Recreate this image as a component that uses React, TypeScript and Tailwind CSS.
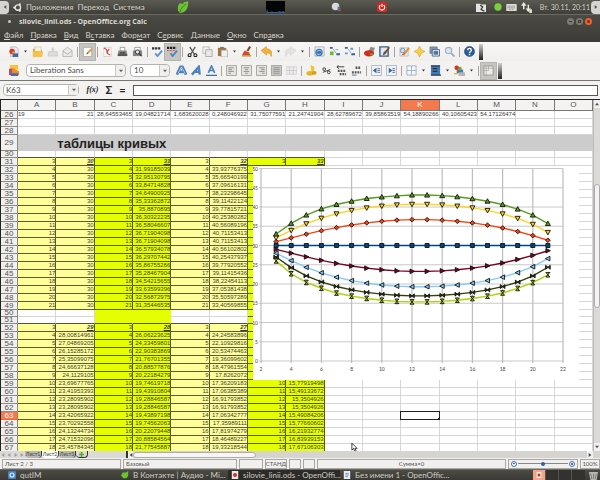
import clsx from "clsx";
import type { ReactNode } from "react";

const COLUMNS = ["A", "B", "C", "D", "E", "F", "G", "H", "I", "J", "K", "L", "M", "N", "O"];

const ROW_26 = [
  "19", "21", "28,64553465", "19,04821714", "1,683620028", "0,248046922", "31,75077591", "21,24741904",
  "28,62789672", "39,85863519", "54,18890266", "40,10605423", "54,17126474",
];

const LINE_31 = [
  "31", "31,99185039", "32,95130795", "33,84714828", "34,64900925", "35,33362872", "35,8870895", "36,30322235",
  "36,58046607", "36,71904098", "36,71904098", "36,57934078", "36,29707442", "35,86755266", "35,28467904",
  "34,54215655", "33,63599396", "32,56872975", "31,35446535",
];

const LINE_32 = [
  "32", "33,93776375", "35,66540199", "37,09616131", "38,23298645", "39,11422124", "39,77815721", "40,25380282",
  "40,56089196", "40,71153413", "40,71153413", "40,56102802", "40,25437937", "39,77920552", "39,11415436",
  "38,22454113", "37,05381438", "35,50597289", "33,40569855",
];

const LINE_29 = [
  "29", "28,00814961", "27,04869205", "26,15285172", "25,35099075", "24,66637128", "24,1129105", "23,69677765",
  "23,41953393", "23,28095902", "23,28095902", "23,42065922", "23,70292558", "24,13244734", "24,71532096",
  "25,45784345",
];

const LINE_28 = [
  "28", "26,06223625", "24,33459801", "22,90383869", "21,76701355", "20,88577876", "20,22184279", "19,74619718",
  "19,43910804", "19,28846587", "19,28846587", "19,43897198", "19,74562063", "20,22079448", "20,88584564",
  "21,77545887",
];

const LINE_27 = [
  "27", "24,24583896", "22,10929816", "20,53474463", "19,36099602", "18,47961554", "17,8262072", "17,36209183",
  "17,06385389", "16,91793852", "16,91793852", "17,06342777", "17,35989111", "17,81974279", "18,46489227",
  "19,33218544",
];

const LINE_26 = [
  "26", "22,66", "20,4", "18,9", "17,65", "16,85", "16,25", "15,77919498", "15,49133672", "15,3504926",
  "15,3504926", "15,49084206", "15,77660602", "16,21932774", "16,83939153", "17,67106303",
];

const toNumber = (value: string) => Number(value.replace(",", "."));

/* ---------- icons ---------- */

const ICONS: Record<string, ReactNode> = {
  newDoc: (
    <>
      <path d="M3 1h6l2 2v9H3z" fill="#e9edf2" stroke="#8b97a8" strokeWidth=".6" />
      <circle cx="4.500" cy="6" r="3" fill="#d9362b" />
      <path d="M4.500 6v3a3 3 0 0 0 3-3z" fill="#f3a32a" />
      <path d="M5 8h6v4H5z" fill="#4468a8" />
    </>
  ),
  open: (
    <>
      <path d="M1 3h4l1 1h5v8H1z" fill="#e0a13c" />
      <path d="M3 1h7v5H3z" fill="#f3efe2" stroke="#c9b98c" strokeWidth=".5" />
      <path d="M1 6h11l-1 6H1z" fill="#f9c04a" />
    </>
  ),
  save: (
    <>
      <path d="M2 6h9l1 5H1z" fill="#dcdcda" stroke="#bdbdbb" strokeWidth=".6" />
      <path d="M6 1l3 3H7.500v3h-2V4H4z" fill="#d0d0ce" />
    </>
  ),
  mail: (
    <>
      <path d="M1 5l5-3.500L11 5v6.500H1z" fill="#e9e9e7" stroke="#aaa" strokeWidth=".8" />
      <path d="M1 5.500L6 9l5-3.500" fill="none" stroke="#aaa" strokeWidth=".8" />
    </>
  ),
  edit: (
    <>
      <path d="M1.500 1.500h9v10h-9z" fill="#fff" stroke="#999" strokeWidth=".7" />
      <path d="M5 9l1-2.500L10 3l1 1-4 4z" fill="#f0962c" stroke="#d8801c" strokeWidth=".5" />
      <path d="M5 9l1-2 1 1z" fill="#4a3a28" />
    </>
  ),
  pdf: (
    <>
      <path d="M2 1.500h8v10H2z" fill="#fdfdfd" stroke="#bbb" strokeWidth=".6" />
      <path d="M2 2l3 2 1 4 3 2M8 3L5 8" stroke="#d23a2c" strokeWidth="1.200" fill="none" />
    </>
  ),
  print: (
    <>
      <path d="M3.500 1.500h5v4h-5z" fill="#fff" stroke="#777" strokeWidth=".7" />
      <path d="M1.500 5h9l1 5.500h-11z" fill="#8d8d8b" />
      <path d="M1 8.500h10V11H1z" fill="#555" />
      <path d="M3 7h6v1H3z" fill="#222" />
    </>
  ),
  preview: (
    <>
      <path d="M3 1.500h6v4H3z" fill="#fff" stroke="#777" strokeWidth=".7" />
      <path d="M1 5h10v6H1z" fill="#858583" />
      <circle cx="6" cy="6.500" r="2.300" fill="#dce6ee" stroke="#333" />
      <path d="M7.500 8l3 3" stroke="#333" strokeWidth="1.200" />
    </>
  ),
  spell: (
    <>
      <path d="M0 2.500h9" stroke="#333" strokeDasharray="2.500 .8" strokeWidth="2.500" />
      <path d="M3.500 8l2.500 3 5-6" stroke="#5b93cf" strokeWidth="2" fill="none" />
    </>
  ),
  autoSpell: (
    <>
      <path d="M0 2h10" stroke="#222" strokeDasharray="2.500 .8" strokeWidth="2.500" />
      <path d="M0 5h9" stroke="#d43a2a" strokeDasharray="1 .6" />
      <path d="M4 8l2 3 5-6" stroke="#4a86c8" strokeWidth="2" fill="none" />
    </>
  ),
  cut: (
    <>
      <path d="M3 1l5 8M9 1L4 9" stroke="#555" strokeWidth="1.400" />
      <circle cx="2.800" cy="10" r="1.600" fill="none" stroke="#222" strokeWidth="1.200" />
      <circle cx="9.200" cy="10" r="1.600" fill="none" stroke="#222" strokeWidth="1.200" />
    </>
  ),
  copy: (
    <>
      <path d="M1 1h7v7H1z" fill="#f4f4f2" stroke="#aaa" strokeWidth=".8" />
      <path d="M4 4h7v7.500H4z" fill="#e8e8e6" stroke="#999" strokeWidth=".8" />
    </>
  ),
  paste: (
    <>
      <path d="M1 2h9v9H1z" fill="#a4743c" />
      <path d="M3.500 1h4v2h-4z" fill="#777" />
      <path d="M4.500 4.500h7V12h-7z" fill="#f1f1ef" stroke="#999" strokeWidth=".7" />
    </>
  ),
  brush: (
    <>
      <path d="M9 0l2 1-3 5-2-1z" fill="#7a4a2b" />
      <path d="M4 5l5 2 1 3H1z" fill="#d9482e" />
      <path d="M1 10h10v1.500H1z" fill="#b59a3a" />
    </>
  ),
  undo: <path d="M0 5l6-4.500V3c5 0 7 4 5 8.500 0-3-2-4-5-4V10z" fill="#f3b23a" stroke="#c98a1c" strokeWidth=".5" />,
  redo: <path d="M12 5L6 .5V3c-5 0-7 4-5 8.500 0-3 2-4 5-4V10z" fill="#e2e2e0" stroke="#cacac8" strokeWidth=".5" />,
  link: (
    <>
      <path d="M1 1h10v10H1z" fill="#eceff3" stroke="#9aa6b4" strokeWidth=".8" />
      <circle cx="5.500" cy="7" r="4" fill="#3f73b3" />
      <path d="M3 6c2-2 4-1 5 0M3 8.500c2 1 3 1 4.500 0" stroke="#b5d4ee" fill="none" />
    </>
  ),
  sortAsc: (
    <>
      <path d="M1 2h3M8 9h4" stroke="#2d62a8" strokeWidth="2" />
      <path d="M4 3l4 5" stroke="#99b" />
      <path d="M1 6h4v4H1z" fill="#6eb83d" />
      <path d="M7 4h3" stroke="#7aa" />
    </>
  ),
  sortDesc: (
    <>
      <path d="M1 2h3M8 9h4" stroke="#2d62a8" strokeWidth="2" />
      <path d="M4 3l4 5" stroke="#99b" />
      <path d="M7 3h3M1 8h3" stroke="#5a9ad4" strokeWidth="2" />
    </>
  ),
  chart: (
    <>
      <path d="M5 6l2-5 5 1-2 5z" fill="#8a8a88" />
      <ellipse cx="5.500" cy="8" rx="5.500" ry="3.500" fill="#d42a1e" />
      <path d="M6 8h4v2H7z" fill="#5aa83a" />
    </>
  ),
  draw: (
    <>
      <path d="M1 1h9v10H1z" fill="#dfe9f4" stroke="#375d92" strokeWidth="1.500" />
      <path d="M11 1L5 7 4 10l3-1 5-7z" fill="#7c4e22" />
    </>
  ),
  find: (
    <>
      <path d="M1 2h9v9H1z" fill="#eef1f4" stroke="#a2abb5" strokeWidth=".7" />
      <circle cx="4" cy="5" r="2.500" fill="#cfe0f2" stroke="#6d88a8" />
      <path d="M5 10l6-8" stroke="#e98c25" strokeWidth="2" />
      <path d="M3 10l3-2" stroke="#c33" />
    </>
  ),
  nav: <path d="M6 0l2 4 4 2-4 2-2 4-2-4-4-2 4-2z" fill="#f7cf45" stroke="#cfa21f" strokeWidth=".6" />,
  gallery: (
    <>
      <path d="M1 1h8v7H1z" fill="#8198b5" stroke="#566" strokeWidth=".6" />
      <path d="M3.500 4h8v7h-8z" fill="#e6edf5" stroke="#345" strokeWidth=".8" />
      <path d="M5 5.500h5v4H5z" fill="#4a76ab" />
    </>
  ),
  zoom: (
    <>
      <circle cx="5" cy="5" r="3.500" fill="#d7e3ef" stroke="#9fb0c2" strokeWidth="1.200" />
      <path d="M7.500 7.500l4 4" stroke="#a9a9b4" strokeWidth="2" />
    </>
  ),
  help: (
    <>
      <circle cx="6" cy="6" r="5.500" fill="#2a5b9c" stroke="#1c416f" strokeWidth=".6" />
      <path d="M4 4.500c0-2.500 4-2.500 4 0 0 1.500-2 1.500-2 3M6 8.500V10" stroke="#fff" strokeWidth="1.500" fill="none" />
    </>
  ),
  styles: (
    <>
      <path d="M1 0h9v5H1z" fill="#f7c23b" />
      <path d="M0 4h4v7H0z" fill="#b94e6a" />
      <path d="M4 3l7 4v4H4z" fill="#ef8d1f" />
      <path d="M2 9h8v3H2z" fill="#4468a8" />
    </>
  ),
  bold: (
    <>
      <path d="M1 10.500L5 2h2l4 8.500M3 7.500h6" stroke="#4d83bd" strokeWidth="3" fill="none" />
      <path d="M2 9.500L6 2l4 7.500" stroke="#cfe2f4" strokeWidth=".7" fill="none" />
    </>
  ),
  italic: <path d="M1 10.500L8.500 2l1 8.500M4 7.500h5" stroke="#4d83bd" strokeWidth="2.600" fill="none" />,
  underline: (
    <>
      <path d="M2.500 8.500L6 1l3.500 7.500M4 6h4" stroke="#4d83bd" strokeWidth="1.800" fill="none" />
      <path d="M0 11.300h12" stroke="#3d73ad" strokeWidth="1.400" />
    </>
  ),
  alignLeft: (
    <>
      <path d="M.5.5h11v11H.5z" fill="#e3e3df" stroke="#a3a39f" />
      <path d="M2.500 3h6M2.500 5h4M2.500 7h6M2.500 9h3" stroke="#8c8c88" />
    </>
  ),
  alignCenter: (
    <>
      <path d="M.5.5h11v11H.5z" fill="#e3e3df" stroke="#a3a39f" />
      <path d="M3 3h6M4.500 5h3M3 7h6M4.500 9h3" stroke="#8c8c88" />
    </>
  ),
  alignRight: (
    <>
      <path d="M.5.5h11v11H.5z" fill="#e3e3df" stroke="#a3a39f" />
      <path d="M3.500 3h6M5.500 5h4M3.500 7h6M6.500 9h3" stroke="#8c8c88" />
    </>
  ),
  justify: (
    <>
      <path d="M.5.5h11v11H.5z" fill="#c8c8c4" stroke="#a3a39f" />
      <path d="M2.500 3h7M2.500 5h7M2.500 7h7M2.500 9h7" stroke="#94948f" />
    </>
  ),
  merge: <path d="M0 2h12v8H0zM4 2v8M8 2v8M0 6h12" fill="#eee" stroke="#c4c4c2" strokeWidth=".8" />,
  currency: (
    <>
      <path d="M5 0l4 2v6H6z" fill="#f2c22c" />
      <ellipse cx="4.500" cy="9" rx="4" ry="2.500" fill="#e8b420" />
      <ellipse cx="9" cy="8.500" rx="2.500" ry="2" fill="#d39c18" />
    </>
  ),
  percent: (
    <>
      <circle cx="3.500" cy="4.500" r="1.500" fill="none" stroke="#333" />
      <circle cx="8.500" cy="8" r="1.500" fill="none" stroke="#333" />
      <path d="M2 8L10 5" stroke="#333" />
    </>
  ),
  addDecimal: (
    <>
      <path d="M1 2h8M3 0L1 2l2 2" stroke="#333" fill="none" />
      <path d="M2 6.500h9M4 10h7" stroke="#555" strokeDasharray="2 1" strokeWidth="2.400" />
    </>
  ),
  delDecimal: (
    <>
      <path d="M5 3h6" stroke="#555" strokeDasharray="2 1" strokeWidth="2.500" />
      <path d="M1 8h10" stroke="#555" strokeDasharray="2 1" strokeWidth="2.500" />
      <path d="M1 11h5" stroke="#3a6ba8" />
    </>
  ),
  outdent: (
    <>
      <path d="M.5.5h11v11H.5z" fill="#f0f4f8" stroke="#a8b4c0" />
      <path d="M6 3L2 6l4 3z" fill="#2d67a8" />
      <path d="M7 4h3M7 6h3M7 8h3" stroke="#667" />
    </>
  ),
  indent: (
    <>
      <path d="M.5.5h11v11H.5z" fill="#f0f4f8" stroke="#a8b4c0" />
      <path d="M3 3l4 3-4 3z" fill="#2d67a8" />
      <path d="M7 4h3M7 6h3M7 8h3" stroke="#667" />
    </>
  ),
  borders: <path d="M1 1h10v10H1zM6 1v10M1 6h10" fill="#f4f6f8" stroke="#9fb2c8" />,
  fill: (
    <>
      <path d="M1 1h10v10H1z" fill="#3e78bd" />
      <path d="M1 1h10M3 4h5M3 7h5M1 11h11" stroke="#333" strokeWidth="1.200" />
    </>
  ),
  fontColor: (
    <>
      <path d="M3 5h7v4H3z" fill="#4377b5" />
      <circle cx="3" cy="3" r="2.500" fill="#d93025" />
      <circle cx="6.500" cy="4" r="2" fill="#68a93a" />
      <path d="M5 8h7v4H5z" fill="#b5b5b3" />
      <path d="M0 9.500h4" stroke="#e8b420" strokeWidth="1.500" />
    </>
  ),
  grid: (
    <>
      <path d="M1 1h10v10H1z" fill="#eceae6" stroke="#8a8a86" strokeWidth=".8" />
      <path d="M3.500 1v10M6 1v5M1 3.500h10M1 6h5" stroke="#8a8a86" strokeWidth=".5" />
    </>
  ),
};

const LABELS: Record<string, string> = {
  newDoc: "Создать", open: "Открыть", save: "Сохранить", mail: "Отправить", edit: "Правка", print: "Печать",
  cut: "Вырезать", copy: "Копировать", paste: "Вставить", undo: "Отменить", redo: "Вернуть", help: "Справка",
};

function Icon({ name }: { name: string }) {
  return (
    <svg viewBox="0 0 12 12" className="size-[11px]" aria-hidden="true">
      {ICONS[name]}
    </svg>
  );
}

const ARROWS = {
  up: "M0 5l3-4 3 4z",
  down: "M0 1l3 4 3-4z",
  left: "M5 0L1 3l4 3z",
  right: "M1 0l4 3-4 3z",
};

function Arrow({ dir, className = "size-1" }: { dir: keyof typeof ARROWS; className?: string }) {
  return (
    <svg viewBox="0 0 6 6" className={className} aria-hidden="true">
      <path d={ARROWS[dir]} fill="currentColor" />
    </svg>
  );
}

/* "|" is a separator, "." a drop-down arrow, a leading "!" marks a pressed button */
function Tools({ items }: { items: string[] }) {
  return (
    <>
      {items.map((item, index) => {
        if (item === "|") {
          return (
            <span key={index} className="flex w-[5px] shrink-0 justify-center">
              <span className="h-[10px] w-px bg-[#a5a4a0]" />
            </span>
          );
        }
        if (item === ".") {
          return (
            <button key={index} type="button" aria-label="Ещё" className="flex w-[9px] shrink-0 justify-center text-[#333]">
              <Arrow dir="down" className="size-[3px]" />
            </button>
          );
        }
        const pressed = item.startsWith("!");
        const name = pressed ? item.slice(1) : item;
        return (
          <button
            key={index}
            type="button"
            aria-label={LABELS[name] ?? name}
            aria-pressed={pressed}
            className={clsx(
              "flex h-4 w-[15px] shrink-0 items-center justify-center",
              pressed && "bg-[#c6c5c2] ring-1 ring-[#b4b3b0]",
            )}
          >
            <Icon name={name} />
          </button>
        );
      })}
      <span className="ml-[2px] h-4 w-1 shrink-0 bg-linear-to-b from-[#d0d0d0] via-[#777] to-[#222]" />
    </>
  );
}

/* ---------- desktop panel, title, menu ---------- */

function DesktopPanel() {
  return (
    <header className="flex h-[14px] shrink-0 items-center bg-linear-to-b from-[#5b5a52] to-[#3f3e39] text-[8px] text-[#d2cfc4]">
      <button type="button" aria-label="Скрыть панель слева" className="flex h-[13px] w-[9px] items-center justify-center rounded-r-sm bg-[#d5d4d0] text-[#555]">
        <Arrow dir="left" />
      </button>
      <svg viewBox="0 0 12 12" className="ml-1 size-[9px]" aria-hidden="true">
        <circle cx="6.500" cy="6" r="3.600" fill="none" stroke="#e6e4dc" strokeWidth="1.800" />
        <circle cx="1.600" cy="6" r="1.500" fill="#e6e4dc" />
        <circle cx="9" cy="1.700" r="1.500" fill="#e6e4dc" />
        <circle cx="9" cy="10.300" r="1.500" fill="#e6e4dc" />
      </svg>
      <nav className="ml-1 flex gap-1">
        <button type="button">Приложения</button>
        <button type="button">Переход</button>
        <button type="button">Система</button>
      </nav>
      <div className="flex flex-1 items-center">
        <svg viewBox="0 0 12 12" className="ml-8 size-3" aria-hidden="true">
          <path d="M7 1L6 3 3 2C0 5 0 10 3 12c5 0 9-4 8-12L9 1z" fill="#6cc234" />
          <path d="M3 11c1-4 3-6 6-8" stroke="#2f7414" strokeWidth=".8" fill="none" />
        </svg>
        <svg viewBox="0 0 19 12" className="ml-[77px] h-3 w-[19px]" aria-hidden="true">
          <path d="M0 0h19v12H0z" fill="#050505" />
          <path d="M0 12l1-4 1 3h3l1-1 1 1h4l3-1 1 1 2-1 2 1v1z" fill="#2b5e9e" />
        </svg>
        <svg viewBox="0 0 12 12" className="ml-[46px] size-[10px]" aria-hidden="true">
          <circle cx="5.500" cy="5.500" r="4.500" fill="#d5dadd" />
          <path d="M8 5l3 2v4H8z" fill="#3b78b8" />
          <path d="M9.500 7h2v4h-2z" fill="#c8402a" />
        </svg>
        <svg viewBox="0 0 12 12" className="ml-9 size-[10px]" aria-hidden="true">
          <rect width="12" height="12" rx="1.500" fill="#cf2a20" />
          <path d="M4 3.800a3.300 3.300 0 1 0 4 0M6 2v4" stroke="#fff" strokeWidth="1.300" fill="none" />
        </svg>
      </div>
      <div className="flex items-center gap-1">
        <svg viewBox="0 0 12 12" className="mr-1 size-[10px]" aria-hidden="true">
          <path d="M0 2h5l1 1h6v9H0z" fill="#e4e4e2" />
          <path d="M5 4l3 2-2 3 4 2" stroke="#333" strokeWidth="1.500" fill="none" />
        </svg>
        <svg viewBox="0 0 12 12" className="size-2" aria-hidden="true">
          <circle cx="6" cy="6" r="5.500" fill="#77d03c" />
        </svg>
        <svg viewBox="0 0 12 8" className="h-[7px] w-[11px]" aria-hidden="true">
          <rect width="12" height="8" rx="1" fill="#dddcd6" />
          <path d="M1.500 2.500h9M1.500 4.300h9M3 6h6" stroke="#777" strokeWidth=".9" strokeDasharray="1.200 .6" />
        </svg>
        <svg viewBox="0 0 12 12" className="mr-1 size-[11px]" aria-hidden="true">
          <path d="M3 8V3M8 3v7" stroke="#eceae2" strokeWidth="1.600" />
          <path d="M0 4l3-4 3 4zM5 7l3 4 3-4z" fill="#eceae2" />
          <path d="M9 8h3v4H9z" fill="#e6dcc0" />
        </svg>
        <time className="text-[7px]">Вт. 30.11, 20:11</time>
      </div>
      <button type="button" aria-label="Скрыть панель справа" className="ml-px flex h-[13px] w-[9px] items-center justify-center rounded-l-sm bg-[#d5d4d0] text-[#555]">
        <Arrow dir="right" />
      </button>
    </header>
  );
}

const MENU: [string, string, string][] = [
  ["", "Ф", "айл"],
  ["", "П", "равка"],
  ["", "В", "ид"],
  ["В", "с", "тавка"],
  ["Фор", "м", "ат"],
  ["С", "е", "рвис"],
  ["", "Д", "анные"],
  ["", "О", "кно"],
  ["Спр", "а", "вка"],
];

function WindowHead() {
  return (
    <div className="shrink-0 border-t border-[#6b6a62] bg-linear-to-b from-[#4b4a44] to-[#3c3b37]">
      <div className="flex h-[13px] items-center px-2 text-[#dfdbd2]">
        <span className="mr-2 size-[3px] rounded-full bg-[#c9c6bd]" />
        <h1 className="flex-1 font-['Open_Sans',sans-serif] text-[7px] leading-[10px] font-bold">silovie_linii.ods - OpenOffice.org Calc</h1>
        <div className="flex gap-[2px]">
          <button type="button" aria-label="Свернуть" className="flex size-[7px] items-center justify-center rounded-full bg-[#7d7b72]">
            <span className="h-px w-[3px] bg-[#3c3b37]" />
          </button>
          <button type="button" aria-label="Развернуть" className="flex size-[7px] items-center justify-center rounded-full bg-[#7d7b72]">
            <span className="size-[3px] border border-[#3c3b37]" />
          </button>
          <button type="button" aria-label="Закрыть" className="flex size-[7px] items-center justify-center rounded-full bg-[#ef6030]">
            <span className="size-[3px] rounded-full bg-[#7e2f14]" />
          </button>
        </div>
      </div>
      <nav className="flex h-[14px] items-center gap-[7px] px-1 pb-px text-[8px] text-[#d8d4ca]">
        {MENU.map(([before, key, after]) => (
          <button key={before + key + after} type="button">
            {before}
            <u>{key}</u>
            {after}
          </button>
        ))}
      </nav>
    </div>
  );
}

/* ---------- toolbars ---------- */

function Combo({ label, value, className }: { label: string; value: string; className: string }) {
  return (
    <div className={clsx("relative flex h-[13px] shrink-0 rounded-sm border border-[#b5b3ae] bg-white", className)}>
      <select aria-label={label} className="w-full appearance-none bg-transparent pl-[3px] text-[8px] leading-[11px] text-[#4a4a4a]">
        <option>{value}</option>
      </select>
      <span className="pointer-events-none absolute inset-y-0 right-0 flex w-[10px] items-center justify-center rounded-r-sm border-l border-[#c9c7c3] bg-[#f0efed] text-[#666]">
        <Arrow dir="down" />
      </span>
    </div>
  );
}

function FormulaBar() {
  return (
    <div className="flex h-[18px] shrink-0 items-center bg-[#f3f2f0] pr-[2px] pl-[3px]">
      <div className="flex h-3 w-[76px] rounded-sm border border-[#b5b3ae] bg-white">
        <input aria-label="Поле имени" defaultValue="K63" className="w-0 flex-1 pl-[2px] text-[8px] text-[#4a4a4a]" />
        <button type="button" aria-label="Список имён" className="flex w-[10px] items-center justify-center border-l border-[#c9c7c3] bg-[#f0efed] text-[#666]">
          <Arrow dir="down" />
        </button>
      </div>
      <div className="flex w-[54px] items-center justify-around px-1 text-[#222]">
        <button type="button" aria-label="Мастер функций" className="font-['Liberation_Serif',serif] text-[8px] font-bold italic">
          f(x)
        </button>
        <button type="button" aria-label="Сумма" className="text-[11px] leading-3 font-bold">
          Σ
        </button>
        <button type="button" aria-label="Функция" className="text-[11px] leading-3 font-bold">
          =
        </button>
      </div>
      <input aria-label="Строка ввода" className="h-[11px] min-w-0 flex-1 border border-[#555] bg-white px-1 text-[8px]" />
    </div>
  );
}

/* ---------- sheet ---------- */

type Tone = "light" | "bright";

interface Cell {
  text: string;
  tone?: Tone;
  heading?: boolean;
}

function buildCells(row: number): Cell[] {
  const cells: Cell[] = COLUMNS.map(() => ({ text: "" }));

  if (row === 26) {
    ROW_26.forEach((text, index) => (cells[index] = { text }));
  }

  const first = row >= 31 && row <= 49;
  const second = row >= 52;
  if (first || second) {
    const index = row - (first ? 31 : 52);
    const lines = first
      ? [LINE_31.map(() => "30"), LINE_31, LINE_32, ["33"]]
      : [LINE_29, LINE_28, LINE_27, LINE_26];
    lines.forEach((line, pair) => {
      const tone: Tone = pair % 2 ? "bright" : "light";
      const covered = pair === 3 && row > 31 && row < 59;
      cells[pair * 2] = { text: covered ? "" : String(index + 3), tone };
      cells[pair * 2 + 1] = covered ? { text: "" } : { text: line[index], tone, heading: index === 0 };
    });
  }

  if (row === 50 || row === 51) {
    cells[6] = { text: "", tone: "bright" };
  }
  return cells;
}

const SHORT_ROWS = [30, 50, 51];

function SheetRow({ row }: { row: number }) {
  const active = row === 63;
  const short = SHORT_ROWS.includes(row);
  const head = (
    <th
      scope="row"
      className={clsx(
        "border-r border-b p-0 text-center text-[8px] font-normal",
        short ? "leading-[6px]" : "leading-[7px]",
        active ? "border-[#e0683c] bg-[#f47a4d] font-bold text-white" : "border-[#8b8a86] bg-[#f1f0ee] text-[#555]",
      )}
    >
      {row}
    </th>
  );

  if (row === 29) {
    return (
      <tr className="h-4">
        {head}
        <td className="bg-[#cccccc] p-0" />
        <td colSpan={14} className="bg-[#cccccc] p-0 pl-px text-[13px] leading-[15px] font-bold text-[#222]">
          таблицы кривых
        </td>
      </tr>
    );
  }

  return (
    <tr className={short ? "h-[7px]" : "h-2"}>
      {head}
      {buildCells(row).map((cell, index) => {
        const gap = (row === 50 || row === 51) && (index === 2 || index === 3);
        const edge = (row === 30 && index < 8) || (row === 51 && index < 6);
        return (
          <td
            key={COLUMNS[index]}
            className={clsx(
              "relative border-r border-b p-0 text-[6px] whitespace-nowrap",
              short ? "leading-[6px]" : "leading-[7px]",
              row === 26 && index === 0 ? "text-left" : "text-right",
              gap && "border-[#e6ff00] bg-[#e6ff00]",
              cell.tone === "light" && "border-[#5c5c2e] bg-[#ffff99]",
              cell.tone === "bright" && "border-[#565e00] bg-[#e6ff00]",
              !cell.tone && !gap && "border-[#d6d6d6] bg-white",
              edge && "border-b-[#55552a]",
              cell.heading && "font-bold italic underline",
            )}
          >
            {cell.text}
            {active && COLUMNS[index] === "K" && (
              <span className="absolute -inset-px border border-[#222]">
                <span className="absolute -right-[2px] -bottom-[2px] size-[3px] bg-[#222]" />
              </span>
            )}
          </td>
        );
      })}
    </tr>
  );
}

/* ---------- chart ---------- */

type Marker = "up" | "down" | "diamond" | "square" | "right" | "left" | "bow" | "hourglass";

interface Series {
  color: string;
  marker: Marker;
  values: number[];
}

const SERIES: Series[] = [
  { color: "#ff420e", marker: "diamond", values: LINE_31.map(toNumber) },
  { color: "#ffd320", marker: "down", values: LINE_32.map(toNumber) },
  {
    color: "#579d1c",
    marker: "up",
    values: [33, 35.75, 37.9, 39.5, 40.65, 41.5, 42.2, 42.6, 42.9, 43.1, 43.1, 42.95, 42.65, 42.15, 41.5, 40.65, 39.45, 37.9, 35.7],
  },
  { color: "#7e0021", marker: "right", values: LINE_31.map((value) => 60 - toNumber(value)) },
  { color: "#004586", marker: "square", values: LINE_31.map(() => 30) },
  { color: "#83caff", marker: "left", values: LINE_32.map((value) => 60 - toNumber(value)) },
  { color: "#314004", marker: "bow", values: [...LINE_27.map(toNumber), 20.5, 22.1, 24.35] },
  { color: "#aecf00", marker: "hourglass", values: [...LINE_26.map(toNumber), 18.85, 20.35, 22.4] },
];

const MARKERS: Record<Marker, string> = {
  up: "M0-2.500L2.500 2H-2.500z",
  down: "M0 2.500L2.500-2H-2.500z",
  diamond: "M0-2.300L2.300 0 0 2.300-2.300 0z",
  square: "M-2-2h4v4h-4z",
  right: "M2.500 0L-2-2.300v4.600z",
  left: "M-2.500 0L2-2.300v4.600z",
  bow: "M-2.300-2L2.300 2v-4L-2.300 2z",
  hourglass: "M-2-2.300h4L-2 2.300h4z",
};

const px = (value: number) => 8 + (value - 2) * 15.1;
const py = (value: number) => 195 - value * 3.85;

function Chart() {
  return (
    <svg viewBox="0 0 326 214" className="absolute top-[66px] left-[252px] h-[214px] w-[326px] bg-white" role="img" aria-label="Силовые линии">
      {Array.from({ length: 11 }, (_, index) => index * 5).map((tick) => (
        <g key={tick}>
          <line x1={px(2) - 2} x2={px(22)} y1={py(tick)} y2={py(tick)} stroke="#c8c8c8" strokeWidth="1.200" />
          <text x={px(2) - 3} y={py(tick) + 2} textAnchor="end" fontSize="5" fill="#444">
            {tick}
          </text>
        </g>
      ))}
      {Array.from({ length: 11 }, (_, index) => 2 + index * 2).map((tick) => (
        <g key={tick}>
          <line x1={px(tick)} x2={px(tick)} y1={py(50)} y2={py(0) + 2} stroke="#bdbdbd" strokeWidth="1.200" />
          <text x={px(tick)} y={py(0) + 10} textAnchor="middle" fontSize="5" fill="#444">
            {tick}
          </text>
        </g>
      ))}
      {SERIES.map((series) => (
        <g key={series.marker}>
          <polyline
            points={series.values.map((value, index) => `${px(index + 3)},${py(value)}`).join(" ")}
            fill="none"
            stroke={series.color}
            strokeWidth="1.400"
          />
          {series.values.map((value, index) => (
            <path
              key={index}
              d={MARKERS[series.marker]}
              transform={`translate(${px(index + 3)} ${py(value)})`}
              fill={series.color}
              stroke="#111"
              strokeWidth=".9"
            />
          ))}
        </g>
      ))}
    </svg>
  );
}

function Sheet() {
  return (
    <main className="flex min-h-0 flex-1 border-t border-l border-[#222]">
      <div className="relative min-w-0 flex-1 overflow-hidden bg-white">
        <table className="w-full table-fixed border-separate border-spacing-0 font-['Liberation_Sans',sans-serif] text-[#3c3c3c]">
          <thead>
            <tr className="h-[11px]">
              <th className="w-[17px] border-r border-b border-[#777] bg-[#f1f0ee] p-0" />
              {COLUMNS.map((column) => (
                <th
                  key={column}
                  scope="col"
                  className={clsx(
                    "border-r border-b border-[#777] p-0 text-[8px] leading-[10px] font-normal",
                    column === "K" ? "bg-[#f47a4d] font-bold text-white" : "bg-[#f4f3f2] text-[#555]",
                  )}
                >
                  {column}
                </th>
              ))}
            </tr>
          </thead>
          <tbody>
            {Array.from({ length: 42 }, (_, index) => (
              <SheetRow key={index} row={26 + index} />
            ))}
          </tbody>
        </table>
        <Chart />
        <svg viewBox="0 0 8 12" className="absolute top-[342px] left-[350px] h-[11px] w-[7px]" aria-hidden="true">
          <path d="M1 1v8l2-2 1.500 4 1.500-.7L4.500 7H7z" fill="#fff" stroke="#111" strokeWidth=".9" />
        </svg>
      </div>
      <div className="flex w-[7px] shrink-0 flex-col items-center border-l border-[#bbb] bg-[#dcdad7] text-[#555]">
        <button type="button" aria-label="Вверх" className="flex h-2 w-full items-center justify-center bg-[#f2f1ef]">
          <Arrow dir="up" />
        </button>
        <span className="basis-[76px]" />
        <span className="w-[6px] basis-[124px] rounded-sm border border-[#aaa] bg-[#f5f4f3]" />
        <span className="flex-1" />
        <button type="button" aria-label="Вниз" className="flex h-2 w-full items-center justify-center bg-[#f2f1ef]">
          <Arrow dir="down" />
        </button>
      </div>
    </main>
  );
}

/* ---------- bottom bars ---------- */

function SheetTabs() {
  return (
    <div className="flex h-[7px] shrink-0 items-center bg-[#dcdad7] text-[#444]">
      <div className="flex w-[25px] justify-around text-[#999]">
        <button type="button" aria-label="Первый лист">
          <Arrow dir="left" />
        </button>
        <button type="button" aria-label="Предыдущий лист">
          <Arrow dir="left" />
        </button>
        <button type="button" aria-label="Следующий лист">
          <Arrow dir="right" />
        </button>
        <button type="button" aria-label="Последний лист">
          <Arrow dir="right" />
        </button>
      </div>
      {["Лист1", "Лист2", "Лист3"].map((name) => (
        <button
          key={name}
          type="button"
          className={clsx(
            "h-[7px] w-[17px] rounded-b-sm border-r border-[#333] text-[5px] leading-[7px]",
            name === "Лист2" ? "bg-white" : "bg-[#b9b8b4]",
          )}
        >
          {name}
        </button>
      ))}
      <button type="button" aria-label="Добавить лист" className="flex h-[7px] w-3 items-center justify-center rounded-b-sm border-r border-b border-[#333]">
        <svg viewBox="0 0 6 6" className="size-[5px]" aria-hidden="true">
          <path d="M3 0v6M0 3h6" stroke="#4fae2a" strokeWidth="2" />
        </svg>
      </button>
      <span className="w-[38px]" />
      <span className="h-full w-[2px] bg-[#333]" />
      <div className="flex h-full flex-1 items-center bg-[#d6d4d1]">
        <button type="button" aria-label="Влево" className="flex h-full w-[5px] items-center justify-center bg-[#f2f1ef]">
          <Arrow dir="left" />
        </button>
        <span className="h-[6px] w-[26%] rounded-sm border border-[#aaa] bg-[#f7f6f5]" />
        <span className="flex-1" />
        <button type="button" aria-label="Вправо" className="mr-[7px] flex h-full w-[6px] items-center justify-center bg-[#f2f1ef]">
          <Arrow dir="right" />
        </button>
      </div>
    </div>
  );
}

function StatusField({ children, className }: { children?: ReactNode; className: string }) {
  return (
    <div className={clsx("flex h-[10px] items-center border border-[#a9a8a4] leading-[8px] whitespace-nowrap", className)}>
      {children}
    </div>
  );
}

function StatusBar() {
  return (
    <footer className="flex h-[11px] shrink-0 items-center gap-[2px] bg-[#f1f0ee] pl-[2px] text-[6px] text-[#555]">
      <StatusField className="w-[119px] px-[2px]">Лист 2 / 3</StatusField>
      <StatusField className="w-[114px] px-[2px]">Базовый</StatusField>
      <StatusField className="w-6" />
      <StatusField className="w-[22px] justify-center">СТАНД</StatusField>
      <StatusField className="w-3" />
      <StatusField className="w-3" />
      <StatusField className="flex-1 justify-center">Сумма=0</StatusField>
      <StatusField className="w-[70px] justify-between px-[2px]">
        <button type="button" aria-label="Уменьшить" className="flex size-[6px] items-center justify-center rounded-full border border-[#4b78b0]">
          <span className="h-px w-[2px] bg-[#4b78b0]" />
        </button>
        <input
          type="range"
          aria-label="Масштаб"
          defaultValue="50"
          className="h-px w-[50px] appearance-none bg-[#888] [&::-webkit-slider-thumb]:size-[4px] [&::-webkit-slider-thumb]:appearance-none [&::-webkit-slider-thumb]:rounded-full [&::-webkit-slider-thumb]:bg-[#2f5f9c]"
        />
        <button type="button" aria-label="Увеличить" className="flex size-[6px] items-center justify-center rounded-full border border-[#4b78b0]">
          <span className="size-[2px] bg-[#4b78b0]" />
        </button>
      </StatusField>
      <StatusField className="w-5 justify-center">100%</StatusField>
    </footer>
  );
}

const TASKS = [
  { title: "qutIM", icon: "im", width: "w-[118px]" },
  { title: "В Контакте | Аудио - Mi...", icon: "leaf", width: "w-[110px]" },
  { title: "silovie_linii.ods - OpenOffi...", icon: "calc", width: "w-[112px]" },
  { title: "Без имени 1 - OpenOffic...", icon: "doc", width: "w-[112px]" },
];

const TASK_ICONS: Record<string, ReactNode> = {
  im: (
    <>
      <rect width="10" height="10" rx="1" fill="#3e80c4" />
      <circle cx="5" cy="5" r="2.500" fill="none" stroke="#e5f0fa" strokeWidth="1.500" />
    </>
  ),
  leaf: <path d="M9 0L6 2 2 2l-2 4 3 3 4 0 2-3z" fill="#6ac22e" />,
  calc: (
    <>
      <path d="M1 0h8v10H1z" fill="#e9e9e7" />
      <circle cx="5" cy="5" r="2.500" fill="#cc3427" />
    </>
  ),
  doc: (
    <>
      <path d="M1 0h8v10H1z" fill="#e9edf2" />
      <path d="M3 3h4M3 5h4M3 7h3" stroke="#567ba8" />
    </>
  ),
};

function Taskbar() {
  return (
    <nav className="flex h-[11px] shrink-0 items-center border-t border-[#6b6a62] bg-linear-to-b from-[#4c4b45] to-[#3a3935] text-[8px] leading-[10px] text-[#cfccc2]">
      {TASKS.map((task) => (
        <button
          key={task.title}
          type="button"
          className={clsx(
            "flex h-full shrink items-center gap-1 whitespace-nowrap",
            task.icon === "im" ? "pl-2" : "pl-[3px]",
            task.icon === "calc" && "bg-[#2c2b28]",
            task.width,
          )}
        >
          <svg viewBox="0 0 10 10" className="size-2 shrink-0" aria-hidden="true">
            {TASK_ICONS[task.icon]}
          </svg>
          {task.title}
        </button>
      ))}
      <span className="flex-1" />
      <div className="mr-1 flex h-[10px] divide-x divide-[#55544e] bg-[#33322f]">
        <button type="button" aria-label="Рабочее место 1" className="flex w-[13px] items-center justify-center bg-[#f2a488]">
          <svg viewBox="0 0 10 10" className="size-[6px]" aria-hidden="true">
            {TASK_ICONS.calc}
          </svg>
        </button>
        <button type="button" aria-label="Рабочее место 2" className="w-[13px]" />
        <button type="button" aria-label="Рабочее место 3" className="w-[13px]" />
        <button type="button" aria-label="Рабочее место 4" className="w-[13px]" />
      </div>
      <svg viewBox="0 0 10 10" className="mr-[2px] size-[9px]" aria-hidden="true">
        <path d="M0 1h10L8.500 10h-7z" fill="#b9b8b2" />
        <path d="M2 3l1 6M5 3v6M8 3L7 9" stroke="#66655f" strokeWidth=".8" />
      </svg>
    </nav>
  );
}

export default function App() {
  return (
    <div className="flex h-screen flex-col overflow-hidden bg-[#f2f1ef] font-['Lato','Open_Sans',sans-serif]">
      <DesktopPanel />
      <WindowHead />
      <div className="flex h-[19px] shrink-0 items-center bg-linear-to-b from-[#f8f7f6] to-[#efeeec] pl-[6px]" role="toolbar" aria-label="Стандартная">
        <Tools
          items={[
            "newDoc", ".", "open", "save", "mail", "|", "!edit", "|", "pdf", "print", "preview", "|", "spell", "!autoSpell", "|",
            "cut", "copy", "paste", ".", "brush", "|", "undo", ".", "redo", ".", "|", "link", "sortAsc", "sortDesc", "|",
            "chart", "draw", "|", "find", "nav", "gallery", "zoom", "|", "help",
          ]}
        />
      </div>
      <div className="flex h-5 shrink-0 items-center border-b border-[#77766f] bg-[#f3f2f0] pl-[6px]" role="toolbar" aria-label="Форматирование">
        <button type="button" aria-label="Стили" className="mr-1 flex h-4 w-4 shrink-0 items-center justify-center">
          <Icon name="styles" />
        </button>
        <Combo label="Шрифт" value="Liberation Sans" className="mr-1 w-[100px]" />
        <Combo label="Размер" value="10" className="mr-1 w-10" />
        <Tools
          items={[
            "bold", "italic", "underline", "|", "alignLeft", "alignCenter", "alignRight", "justify", "merge", "|",
            "currency", "percent", "addDecimal", "delDecimal", "|", "outdent", "indent", "|", "borders", ".", "fill", ".",
            "fontColor", ".", "|", "!grid",
          ]}
        />
      </div>
      <FormulaBar />
      <Sheet />
      <SheetTabs />
      <StatusBar />
      <Taskbar />
    </div>
  );
}
